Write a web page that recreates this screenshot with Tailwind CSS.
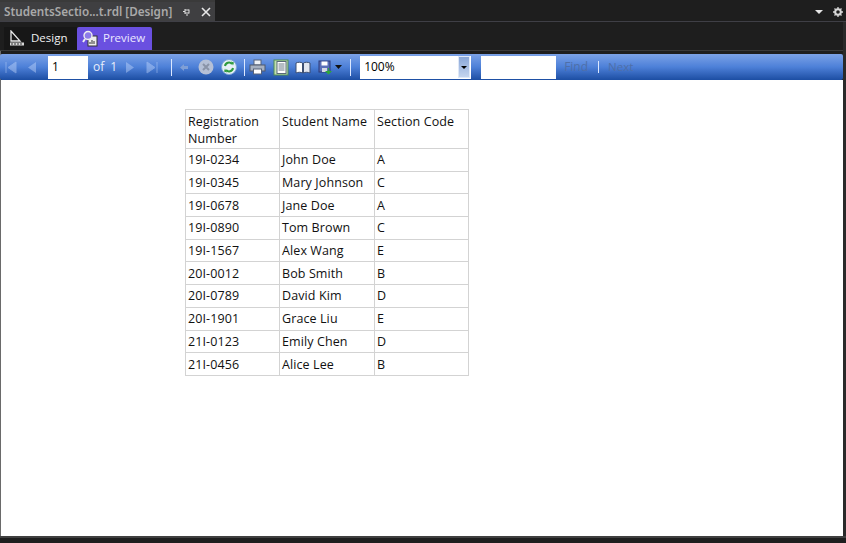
<!DOCTYPE html>
<html lang="en">
<head>
  <meta charset="UTF-8" />
  <title>StudentsSection.rdl [Design]</title>
  <script src="https://cdn.jsdelivr.net/npm/@tailwindcss/browser@4"></script>
</head>
<body class="w-[846px] h-[543px] overflow-hidden bg-[#1e1e1e] font-['Open_Sans','Noto_Sans',sans-serif]">
  <div class="flex flex-col h-full">
    <!-- Document tab strip -->
    <div class="h-[22px] flex items-stretch justify-between border-b border-[#3f3f46] bg-[#1e1e1e]">
      <div class="w-[215px] h-[21px] bg-[#3f3f41] flex items-center pl-[4px] border-t-2 border-[#3a3a3a]">
        <span class="w-[168px] shrink-0 text-[11.7px] font-semibold text-[#a9a9a9] leading-none whitespace-nowrap font-['Noto_Sans',sans-serif]">StudentsSectio...t.rdl [Design]</span>
        <svg class="ml-[10px] shrink-0" width="10" height="10" viewBox="0 0 10 10"><path d="M3 2v5M7 2.5v4M3 3h4M3 6h4M1 4.5h2M5 7v2" stroke="#e0e0e0" fill="none"/></svg>
        <svg class="ml-[9px] shrink-0" width="10" height="10" viewBox="0 0 10 10"><path d="M1 1l8 8M9 1l-8 8" stroke="#e8e8e8" stroke-width="1.6" fill="none"/></svg>
      </div>
      <div class="flex items-center gap-[10px] pr-[3px] pt-[2px]">
        <svg width="8" height="4" viewBox="0 0 8 4"><path d="M0 0h8L4 4z" fill="#e6e6e6"/></svg>
        <svg width="10" height="10" viewBox="0 0 10 10"><circle cx="5" cy="5" r="2.8" fill="none" stroke="#d8d8d8" stroke-width="2"/><path d="M5 0v2M5 8v2M0 5h2M8 5h2M1.5 1.5l1.2 1.2M7.3 7.3l1.2 1.2M8.5 1.5L7.3 2.7M2.7 7.3L1.5 8.5" stroke="#d8d8d8" stroke-width="1.3"/></svg>
      </div>
    </div>

    <div class="flex-1 flex flex-col min-h-0 border-r-[3px] border-[#2a2a2a] border-l border-l-[#6a6a6a]">
      <!-- Design / Preview -->
      <div class="h-[29px] flex items-start pt-[5px] pl-[4px] bg-[#1e1e1e] border-b border-[#3a3a3a] -ml-px">
        <div class="h-[23px] w-[73px] flex items-center pl-[5px] pb-[1px] bg-[#171717]">
          <svg width="16" height="17" viewBox="0 0 16 17"><path d="M2 1v10l9 0z" fill="none" stroke="#e8e8e8" stroke-width="1.3"/><rect x="1" y="12.5" width="14" height="3" fill="#d8d8d8"/><path d="M3 13v2M6 13v2M9 13v2M12 13v2" stroke="#333"/></svg>
          <span class="ml-[6px] text-[11.5px] text-[#f0f0f0] leading-none">Design</span>
        </div>
        <div class="h-[23px] w-[75px] flex items-center pl-[5px] pb-[1px] rounded-t-[2px] bg-[#6a50e0]">
          <svg width="16" height="17" viewBox="0 0 16 17"><rect x="6" y="6" width="9" height="10" fill="#eeeeee" stroke="#333"/><circle cx="6" cy="5.5" r="4" fill="#8d7be8" stroke="#efefef" stroke-width="1.4"/><path d="M3 9l-2 3" stroke="#efefef" stroke-width="2"/><path d="M8 14v-2M10 14v-4M12 14v-3" stroke="#333"/></svg>
          <span class="ml-[5px] text-[11.5px] text-[#ece8ff] leading-none">Preview</span>
        </div>
      </div>

      <!-- Report toolbar -->
      <div class="h-[26px] mt-[3px] -ml-px flex items-center rounded-[2px] bg-gradient-to-b from-[#7ba2e7] via-[#4d80d8] to-[#1c4ea3] text-[#e8eefb]">
        <svg class="ml-[4px] opacity-40" width="13" height="13" viewBox="0 0 13 13"><path d="M2 1v11M12 1v11L4 6.5z" stroke="#cfe0ff" fill="#cfe0ff"/></svg>
        <svg class="ml-[9px] opacity-40" width="11" height="13" viewBox="0 0 11 13"><path d="M10 1v11L2 6.5z" fill="#cfe0ff"/></svg>
        <div class="ml-[11px] w-[40px] h-[23px] bg-white text-black text-[12px] pl-[4px] flex items-center leading-none">1</div>
        <span class="ml-[5px] text-[12px] leading-none">of</span>
        <span class="ml-[6px] text-[12px] leading-none">1</span>
        <svg class="ml-[8px] opacity-40" width="11" height="13" viewBox="0 0 11 13"><path d="M1 1v11l8-5.5z" fill="#cfe0ff"/></svg>
        <svg class="ml-[10px] opacity-40" width="13" height="13" viewBox="0 0 13 13"><path d="M11 1v11M1 1v11l8-5.5z" stroke="#cfe0ff" fill="#cfe0ff"/></svg>
        <div class="ml-[12px] w-px h-[17px] bg-[#dce8ff]"></div>
        <svg class="ml-[7px]" width="11" height="11" viewBox="0 0 11 11"><path d="M9 4H5V2L1 5.500 5 9V7h4z" fill="#7f9fd6"/></svg>
        <svg class="ml-[8px]" width="16" height="16" viewBox="0 0 16 16"><circle cx="8" cy="8" r="7.500" fill="#b5c0d6"/><path d="M5 5l6 6M11 5l-6 6" stroke="#8a94a8" stroke-width="2"/></svg>
        <svg class="ml-[7px]" width="16" height="16" viewBox="0 0 16 16"><circle cx="8" cy="8" r="7.500" fill="#e7f0f7" stroke="#7ea6d8"/><path d="M4 7a4 4 0 0 1 7-2" fill="none" stroke="#2e9a3e" stroke-width="2"/><path d="M12 9a4 4 0 0 1-7 2" fill="none" stroke="#2e9a3e" stroke-width="2"/><path d="M10 2.500l3 1-1 3z" fill="#2e9a3e"/><path d="M6 13.500l-3-1 1-3z" fill="#2e9a3e"/></svg>
        <div class="ml-[7px] w-px h-[17px] bg-[#dce8ff]"></div>
        <svg class="ml-[4px]" width="17" height="16" viewBox="0 0 17 16"><rect x="5" y="1" width="7" height="5" fill="#eef2f8" stroke="#56627a"/><rect x="1" y="6" width="15" height="6" fill="#a6b0c0" stroke="#4f596d"/><rect x="4.500" y="10" width="8" height="5" fill="#fff" stroke="#56627a"/></svg>
        <svg class="ml-[7px]" width="16" height="17" viewBox="0 0 16 17"><rect x="1" y="1" width="14" height="15" fill="#bfe0b0" stroke="#4f8a55"/><rect x="4" y="2.500" width="9" height="12" fill="#fff" stroke="#5a6b78"/><path d="M5.500 5h6M5.500 7h6M5.500 9h6M5.500 11h6" stroke="#6a7a88"/></svg>
        <svg class="ml-[6px]" width="16" height="13" viewBox="0 0 16 13"><path d="M1 2c2-1 5-1 6.500 0v10C6 11 3 11 1 12z" fill="#fff" stroke="#3d4f72"/><path d="M15 2c-2-1-5-1-6.500 0v10c1.500-1 4.500-1 6.500 0z" fill="#e2e6ef" stroke="#3d4f72"/></svg>
        <svg class="ml-[7px]" width="15" height="15" viewBox="0 0 15 15"><rect x="1" y="1" width="11" height="11" fill="#5a6fb8" stroke="#2c3a78"/><rect x="3.500" y="1.500" width="6" height="4" fill="#fff"/><rect x="4" y="8" width="5" height="4" fill="#d4d8e4"/><path d="M14 11h-3V8l-1 0v3H7l3.500 3.500z" fill="#2ea83a"/></svg>
        <svg class="ml-[2px]" width="7" height="4" viewBox="0 0 7 4"><path d="M0 0h7L3.500 4z" fill="#111"/></svg>
        <div class="ml-[8px] w-px h-[17px] bg-[#dce8ff]"></div>
        <div class="ml-[9px] w-[111px] h-[23px] bg-white flex items-center justify-between text-black">
          <span class="pl-[4px] text-[12px] leading-none">100%</span>
          <div class="w-[12px] h-[22px] mr-px flex items-center justify-center bg-gradient-to-b from-[#8aa7d8] to-[#c4d4ee] border border-[#dfe8f7]">
            <svg width="6" height="3" viewBox="0 0 6 3"><path d="M0 0h6L3 3z" fill="#000"/></svg>
          </div>
        </div>
        <div class="ml-[10px] w-[75px] h-[23px] bg-white"></div>
        <span class="ml-[8px] text-[12px] leading-none text-[#4f6fa8]">Find</span>
        <span class="ml-[10px] w-px h-[12px] bg-[#dce8ff]"></span>
        <span class="ml-[9px] text-[11.5px] leading-none text-[#4f6fa8]">Next</span>
      </div>

      <!-- Report body -->
      <div class="flex-1 bg-white pt-[29px] pl-[184px] text-[12.5px] tracking-[0.1px] text-[#111] min-h-0">
        <table class="border-collapse table-fixed w-[283px] leading-[17px]">
          <colgroup><col class="w-[94px]" /><col class="w-[95px]" /><col class="w-[94px]" /></colgroup>
          <tbody>
            <tr class="h-[39px] align-top"><td class="border border-[#d3d3d3] pl-[2px] pt-[3px]">Registration Number</td><td class="border border-[#d3d3d3] pl-[2px] pt-[3px]">Student Name</td><td class="border border-[#d3d3d3] pl-[2px] pt-[3px]">Section Code</td></tr>
            <tr class="h-[22.7px]"><td class="border border-[#d3d3d3] pl-[2px]">19I-0234</td><td class="border border-[#d3d3d3] pl-[2px]">John Doe</td><td class="border border-[#d3d3d3] pl-[2px]">A</td></tr>
            <tr class="h-[22.7px]"><td class="border border-[#d3d3d3] pl-[2px]">19I-0345</td><td class="border border-[#d3d3d3] pl-[2px]">Mary Johnson</td><td class="border border-[#d3d3d3] pl-[2px]">C</td></tr>
            <tr class="h-[22.7px]"><td class="border border-[#d3d3d3] pl-[2px]">19I-0678</td><td class="border border-[#d3d3d3] pl-[2px]">Jane Doe</td><td class="border border-[#d3d3d3] pl-[2px]">A</td></tr>
            <tr class="h-[22.7px]"><td class="border border-[#d3d3d3] pl-[2px]">19I-0890</td><td class="border border-[#d3d3d3] pl-[2px]">Tom Brown</td><td class="border border-[#d3d3d3] pl-[2px]">C</td></tr>
            <tr class="h-[22.7px]"><td class="border border-[#d3d3d3] pl-[2px]">19I-1567</td><td class="border border-[#d3d3d3] pl-[2px]">Alex Wang</td><td class="border border-[#d3d3d3] pl-[2px]">E</td></tr>
            <tr class="h-[22.7px]"><td class="border border-[#d3d3d3] pl-[2px]">20I-0012</td><td class="border border-[#d3d3d3] pl-[2px]">Bob Smith</td><td class="border border-[#d3d3d3] pl-[2px]">B</td></tr>
            <tr class="h-[22.7px]"><td class="border border-[#d3d3d3] pl-[2px]">20I-0789</td><td class="border border-[#d3d3d3] pl-[2px]">David Kim</td><td class="border border-[#d3d3d3] pl-[2px]">D</td></tr>
            <tr class="h-[22.7px]"><td class="border border-[#d3d3d3] pl-[2px]">20I-1901</td><td class="border border-[#d3d3d3] pl-[2px]">Grace Liu</td><td class="border border-[#d3d3d3] pl-[2px]">E</td></tr>
            <tr class="h-[22.7px]"><td class="border border-[#d3d3d3] pl-[2px]">21I-0123</td><td class="border border-[#d3d3d3] pl-[2px]">Emily Chen</td><td class="border border-[#d3d3d3] pl-[2px]">D</td></tr>
            <tr class="h-[22.7px]"><td class="border border-[#d3d3d3] pl-[2px]">21I-0456</td><td class="border border-[#d3d3d3] pl-[2px]">Alice Lee</td><td class="border border-[#d3d3d3] pl-[2px]">B</td></tr>
          </tbody>
        </table>
      </div>

      <!-- Bottom edge -->
      <div class="h-[7px] -ml-px -mr-[3px] border-t-2 border-[#404040] bg-[#1e1e1e]"></div>
    </div>
  </div>
</body>
</html>
